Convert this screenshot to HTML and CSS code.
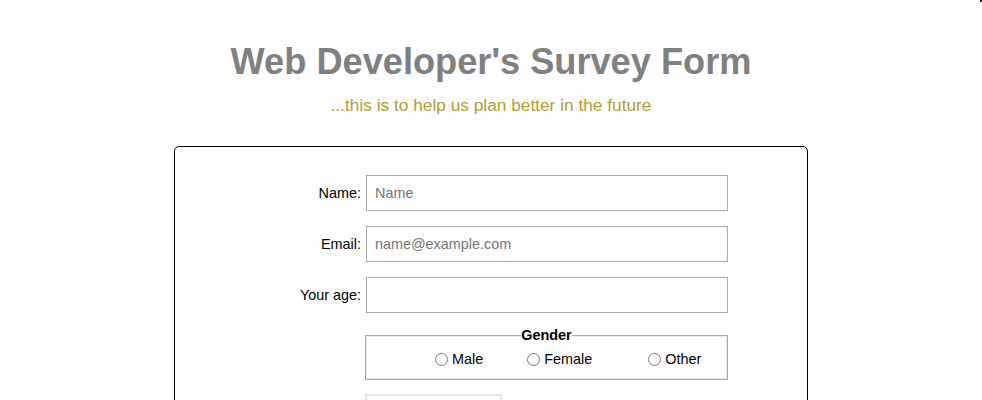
FILE: index.html
```html
<!DOCTYPE html>
<html lang="en">
<head>
<meta charset="utf-8">
<title>Survey Form</title>
<link rel="stylesheet" href="styles.css">
</head>
<body>
<span class="corner-dot"></span>
<header class="header">
  <h1 id="title" class="title">Web Developer's Survey Form</h1>
  <p id="description" class="description">...this is to help us plan better in the future</p>
</header>
<form id="survey-form" class="survey">
  <div class="row">
    <label class="label" for="name">Name:</label>
    <input class="field" id="name" type="text" placeholder="Name">
  </div>
  <div class="row">
    <label class="label" for="email">Email:</label>
    <input class="field" id="email" type="email" placeholder="name@example.com">
  </div>
  <div class="row">
    <label class="label" for="age">Your age:</label>
    <input class="field" id="age" type="number">
  </div>
  <div class="row row-gender">
    <span class="label"></span>
    <fieldset class="gender">
      <legend class="legend">Gender</legend>
      <div class="radios">
        <label class="radio r1"><input type="radio" name="gender"> Male</label>
        <label class="radio r2"><input type="radio" name="gender"> Female</label>
        <label class="radio r3"><input type="radio" name="gender"> Other</label>
      </div>
    </fieldset>
  </div>
  <div class="row">
    <span class="label"></span>
    <div class="dropdown"></div>
  </div>
</form>
</body>
</html>
```
FILE: styles.css
```css
html, body {
  margin: 0;
  padding: 0;
  background: #fff;
  height: 400px;
  overflow: hidden;
}
body {
  font-family: "Liberation Sans", Arial, sans-serif;
  color: #000;
  position: relative;
}
.corner-dot {
  position: absolute;
  top: 0;
  left: 980px;
  width: 2px;
  height: 2px;
  background: #222;
}
.header {
  text-align: center;
  padding-top: 41px;
}
.title {
  margin: 0;
  font-size: 36.2px;
  line-height: 41px;
  font-weight: bold;
  color: #808080;
}
.description {
  margin: 13px 0 0;
  font-size: 17.3px;
  line-height: 20px;
  color: #b0a030;
}
.survey {
  box-sizing: border-box;
  width: 634px;
  margin: 31px auto 0;
  border: 1px solid #000;
  border-radius: 5px;
  padding: 28px 0 40px;
}
.row {
  display: grid;
  grid-template-columns: 186px 363px;
  column-gap: 4px;
  align-items: center;
  margin-bottom: 15px;
}
.row-gender {
  margin-top: -1px;
  margin-bottom: 14px;
}
.label {
  text-align: right;
  font-size: 14.4px;
}
.field {
  box-sizing: border-box;
  height: 36px;
  width: 362px;
  margin-left: 1px;
  border: 1px solid #a9a9a9;
  padding: 0 8px;
  font-family: "Liberation Sans", Arial, sans-serif;
  font-size: 14.4px;
  outline: none;
}
.field::placeholder {
  color: #757575;
}
.gender {
  box-sizing: border-box;
  width: 363px;
  margin: 0;
  border: 1px solid #a9a9a9;
  box-shadow: inset 0 0 0 1px #ececec;
  padding: 0 0 11px;
  min-width: 0;
}
.legend {
  margin: 0 auto;
  padding: 0;
  font-weight: bold;
  font-size: 14.4px;
  line-height: 17px;
}
.radios {
  display: flex;
  align-items: center;
  margin-top: 7px;
  font-size: 14.4px;
  line-height: 17px;
}
.radio {
  display: flex;
  align-items: center;
  white-space: pre;
}
.radio input {
  margin: 0;
  width: 13px;
  height: 13px;
}
.r1 { margin-left: 69px; }
.r2 { margin-left: 44px; }
.r3 { margin-left: 56px; }
.dropdown {
  box-sizing: border-box;
  width: 137px;
  height: 30px;
  border: 2px solid #e6e6e6;
}
```
